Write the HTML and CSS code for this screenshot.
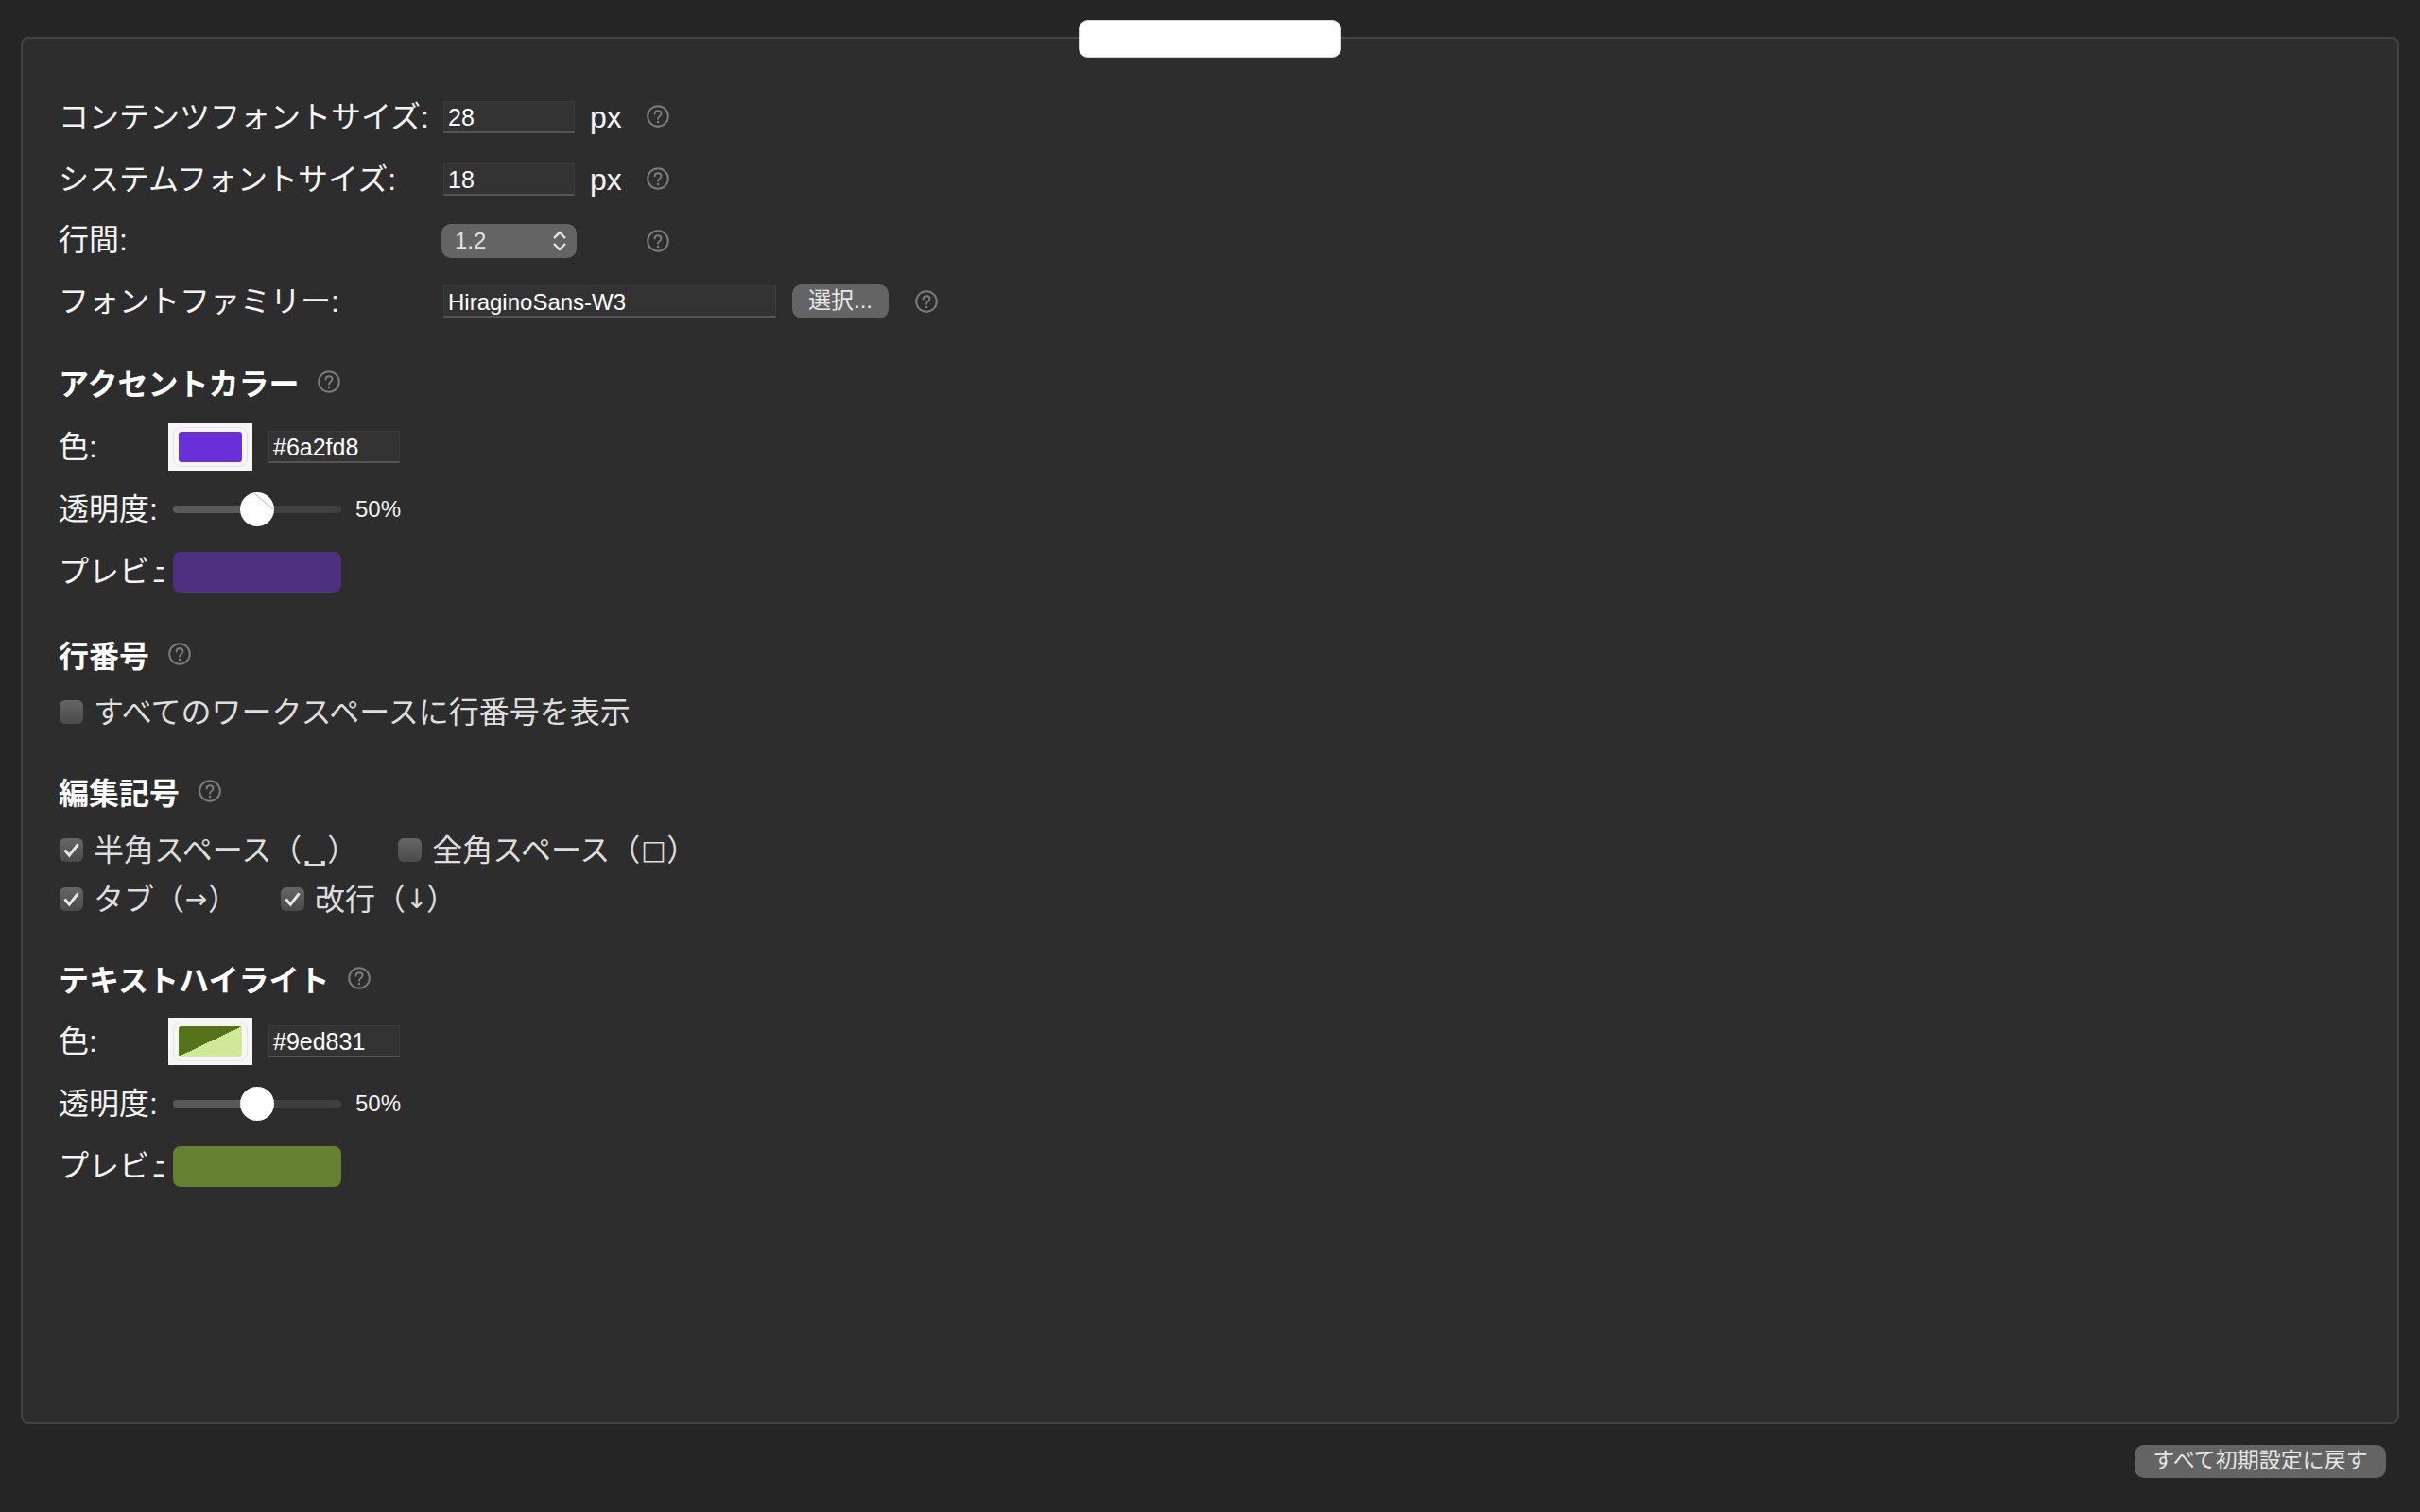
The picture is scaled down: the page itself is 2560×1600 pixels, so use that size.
FILE: index.html
```html
<!DOCTYPE html>
<html lang="ja">
<head>
<meta charset="utf-8">
<title>設定</title>
<link rel="stylesheet" href="styles.css">
</head>
<body>
<svg class="defs" width="0" height="0" aria-hidden="true">
  <symbol id="help" viewBox="0 0 24 24">
    <circle cx="12" cy="12" r="10.8" fill="none" stroke="currentColor" stroke-width="2"/>
    <path d="M8.6 9.6c0-2 1.5-3.3 3.5-3.3s3.4 1.3 3.4 3c0 1.5-.9 2.2-1.9 2.9-1 .7-1.6 1.2-1.6 2.6" fill="none" stroke="currentColor" stroke-width="1.9" stroke-linecap="round"/>
    <circle cx="12" cy="18" r="1.3" fill="currentColor"/>
  </symbol>
  <symbol id="tick" viewBox="0 0 24 24">
    <path d="M4 12l5.5 6.5L20 5" fill="none" stroke="currentColor" stroke-width="3.4"/>
  </symbol>
</svg>
<div class="app">
  <main class="panel">
    <div class="tab"></div>

    <section class="group group-first">
      <div class="row">
        <div class="label">コンテンツフォントサイズ:</div>
        <div class="field num">28</div>
        <div class="unit">px</div>
        <svg class="help help-up"><use href="#help"/></svg>
      </div>
      <div class="row">
        <div class="label">システムフォントサイズ:</div>
        <div class="field num">18</div>
        <div class="unit">px</div>
        <svg class="help help-up"><use href="#help"/></svg>
      </div>
      <div class="row row-tight">
        <div class="label">行間:</div>
        <div class="select">
          <span>1.2</span>
          <svg class="updown" viewBox="0 0 14 24"><path d="M1 9l6-6 6 6M1 15l6 6 6-6" fill="none" stroke="currentColor" stroke-width="2.4"/></svg>
        </div>
        <div class="unit"></div>
        <svg class="help"><use href="#help"/></svg>
      </div>
      <div class="row">
        <div class="label">フォントファミリー:</div>
        <div class="field wide">HiraginoSans-W3</div>
        <div class="btn pick">選択...</div>
        <svg class="help help-pick"><use href="#help"/></svg>
      </div>
    </section>

    <section class="group group-accent">
      <h2 class="heading">アクセントカラー<svg class="help"><use href="#help"/></svg></h2>
      <div class="row">
        <div class="label short">色:</div>
        <div class="swatch"><div class="swatch-in"><div class="chip chip-violet"></div></div></div>
        <div class="field hex">#6a2fd8</div>
      </div>
      <div class="row">
        <div class="label short">透明度:</div>
        <div class="slider"><div class="thumb thumb-mark"></div></div>
        <div class="pct">50%</div>
      </div>
      <div class="row">
        <div class="label short clip">プレビュー:</div>
        <div class="preview preview-violet"></div>
      </div>
    </section>

    <section class="group group-lines">
      <h2 class="heading">行番号<svg class="help"><use href="#help"/></svg></h2>
      <div class="checks">
        <label class="check"><span class="box"></span>すべてのワークスペースに行番号を表示</label>
      </div>
    </section>

    <section class="group group-marks">
      <h2 class="heading">編集記号<svg class="help"><use href="#help"/></svg></h2>
      <div class="checks checks-tall">
        <label class="check"><span class="box"><svg class="tick"><use href="#tick"/></svg></span><span>半角スペース（<span class="sym sym-space">⎵</span>）</span></label>
        <label class="check"><span class="box"></span><span>全角スペース（<span class="sym sym-box">□</span>）</span></label>
      </div>
      <div class="checks">
        <label class="check"><span class="box"><svg class="tick"><use href="#tick"/></svg></span><span>タブ（<span class="sym">→</span>）</span></label>
        <label class="check"><span class="box"><svg class="tick"><use href="#tick"/></svg></span><span>改行（<span class="sym sym-down">↓</span>）</span></label>
      </div>
    </section>

    <section class="group group-highlight">
      <h2 class="heading">テキストハイライト<svg class="help"><use href="#help"/></svg></h2>
      <div class="row">
        <div class="label short">色:</div>
        <div class="swatch"><div class="swatch-in"><div class="chip chip-green"></div></div></div>
        <div class="field hex">#9ed831</div>
      </div>
      <div class="row">
        <div class="label short">透明度:</div>
        <div class="slider"><div class="thumb"></div></div>
        <div class="pct">50%</div>
      </div>
      <div class="row">
        <div class="label short clip">プレビュー:</div>
        <div class="preview preview-green"></div>
      </div>
    </section>
  </main>
  <footer class="foot">
    <div class="btn reset">すべて初期設定に戻す</div>
  </footer>
</div>
</body>
</html>
```

FILE: styles.css
```css
* { box-sizing: border-box; }
html, body { margin: 0; padding: 0; }
body {
  width: 2560px;
  height: 1600px;
  overflow: hidden;
  background: #252525;
  color: #f4f4f4;
  font-family: "Liberation Sans", "Noto Sans CJK JP", sans-serif;
}
.defs { display: block; height: 0; }
.app { display: flex; flex-direction: column; height: 1600px; padding: 39px 22px 0; }
.panel {
  position: relative;
  height: 1468px;
  background: #2d2d2d;
  border: 2px solid #434343;
  border-radius: 8px;
  padding: 50px 0 0 38px;
}
.tab {
  position: absolute;
  left: 1117px;
  top: -20px;
  width: 278px;
  height: 40px;
  background: #fff;
  border: 1px solid #d6d6d6;
  border-radius: 10px;
}
.group-accent { margin-top: 19px; }
.group-lines { margin-top: 21px; }
.group-marks { margin-top: 25px; }
.group-highlight { margin-top: 26px; }
.group-highlight .heading { height: 66px; }
.row { display: flex; align-items: center; height: 66px; }
.row-tight { height: 63px; }
.label {
  width: 407px;
  padding-bottom: 1px;
  font-size: 32px;
  line-height: 44px;
  white-space: nowrap;
}
.label.short { width: 111px; overflow: hidden; }
.field {
  height: 34px;
  background: #333;
  border: 1px solid #3b3b3b;
  border-bottom: 2px solid #555;
  padding-left: 4px;
  font-size: 24px;
  line-height: 33px;
  color: #fff;
  white-space: nowrap;
}
.num { width: 139px; font-size: 25px; }
.wide { width: 352px; }
.hex { width: 139px; margin-left: 17px; font-size: 25px; }
.unit { width: 60px; margin-left: 16px; font-size: 32px; line-height: 44px; }
.help { display: block; width: 24px; height: 24px; color: #7c7c7c; flex: none; }
.help-up { margin-bottom: 3px; }
.help-pick { margin-left: 28px; }
.select {
  display: flex;
  align-items: center;
  justify-content: space-between;
  width: 143px;
  height: 36px;
  margin-left: -2px;
  margin-right: -2px;
  padding: 0 11px 0 14px;
  background: #646464;
  border-radius: 10px;
  font-size: 24px;
  color: #e2e2e2;
}
.updown { display: block; width: 14px; height: 24px; color: #e6e6e6; }
.btn {
  background: #646464;
  border-radius: 10px;
  color: #e6e6e6;
  text-align: center;
  white-space: nowrap;
}
.pick { width: 102px; height: 36px; margin-left: 17px; font-size: 24px; line-height: 34px; }
.heading {
  display: flex;
  align-items: center;
  gap: 20px;
  height: 69px;
  margin: 0;
  padding-bottom: 3px;
  font-size: 32px;
  font-weight: 700;
  color: #fff;
}
.swatch {
  width: 89px;
  height: 50px;
  padding: 4px 5px;
  margin-left: 5px;
  background: #f6f6f6;
}
.swatch-in {
  height: 100%;
  padding: 4px 5px;
  border: 1px solid #e4e4e4;
  border-radius: 9px;
}
.chip { height: 100%; border-radius: 3px; }
.chip-violet { background: #6a2fd8; }
.chip-green { background: linear-gradient(to bottom right, #56731c 50%, #cfe999 50%); }
.slider {
  position: relative;
  width: 178px;
  height: 8px;
  margin-left: 10px;
  border-radius: 4px;
  background: linear-gradient(to right, #595959 50%, #404040 50%);
}
.thumb {
  position: absolute;
  left: 71px;
  top: -14px;
  width: 36px;
  height: 36px;
  border-radius: 50%;
  background: #fff;
  overflow: hidden;
}
.thumb-mark::after {
  content: "";
  position: absolute;
  left: 12px;
  top: 9px;
  width: 26px;
  height: 1px;
  background: #c4c4c4;
  transform: rotate(40deg);
}
.pct { margin-left: 15px; font-size: 24px; line-height: 32px; color: #f2f2f2; }
.preview { width: 178px; height: 43px; margin-left: 10px; border-radius: 8px; }
.preview-violet { background: #4d3080; }
.preview-green { background: #658031; }
.checks { display: flex; align-items: center; height: 51px; gap: 44px; }
.checks-tall { height: 53px; gap: 42px; }
.check {
  display: flex;
  align-items: center;
  gap: 11px;
  font-size: 32px;
  line-height: 44px;
  color: #dedede;
  white-space: nowrap;
}
.sym {
  display: inline-block;
  width: 25px;
  font-family: "DejaVu Sans", sans-serif;
  font-size: 28px;
  line-height: 28px;
  text-align: center;
  vertical-align: 2px;
}
.sym-space { width: 27px; transform: scaleX(2); }
.sym-box { width: 28px; }
.sym-down { width: 22px; }
.box {
  display: flex;
  align-items: center;
  justify-content: center;
  width: 25px;
  height: 25px;
  margin-left: 1px;
  border-radius: 6px;
  background: linear-gradient(#666, #4b4b4b);
}
.tick { display: block; width: 21px; height: 21px; color: #e8e8e8; }
.foot { display: flex; justify-content: flex-end; padding: 22px 14px 0 0; }
.reset { width: 266px; height: 35px; font-size: 23px; line-height: 33px; }
```
